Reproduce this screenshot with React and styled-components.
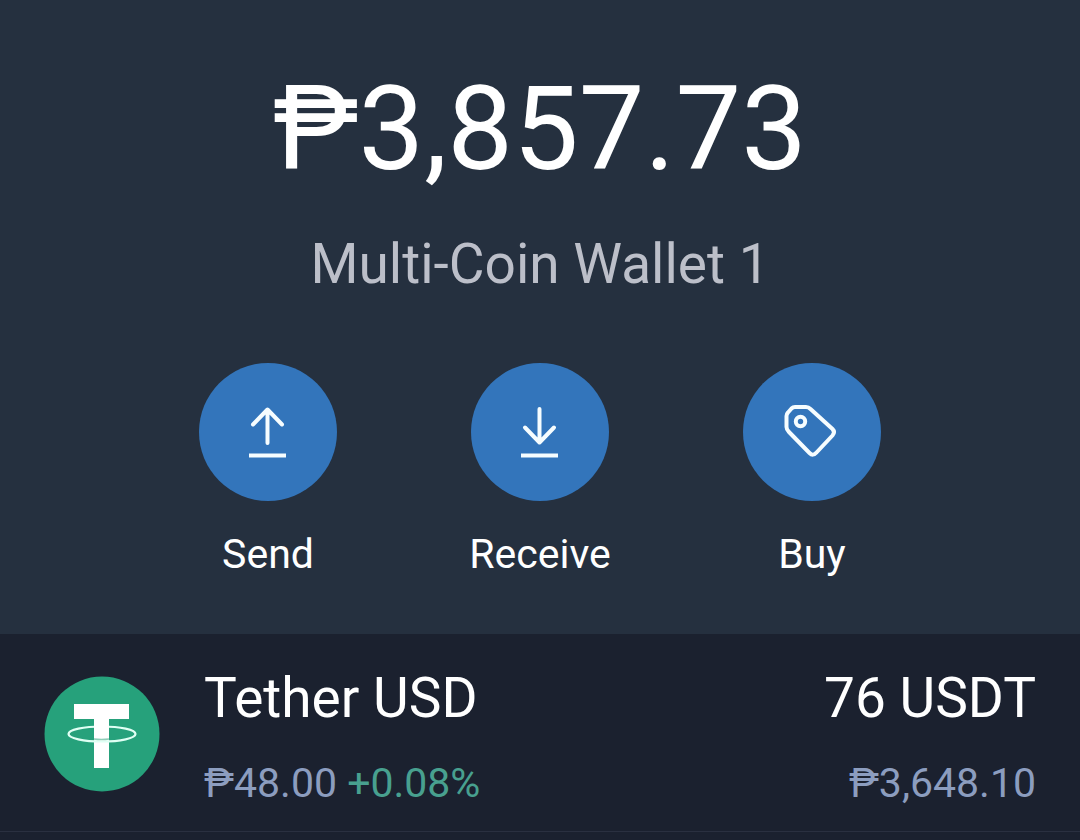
import React from "react";
import styled, { createGlobalStyle } from "styled-components";

const GlobalStyle = createGlobalStyle`
  *, *::before, *::after { box-sizing: border-box; }
  body {
    margin: 0;
    min-height: 100vh;
    background: #1b212f;
    color: #fff;
    font-family: Roboto, "Noto Sans", sans-serif;
  }
`;

const Summary = styled.header`
  display: flex;
  flex-direction: column;
  align-items: center;
  padding: 61px 24px 56px;
  background: #25303f;
`;

const Balance = styled.h1`
  margin: 0;
  font-size: 117px;
  line-height: 136px;
  font-weight: 400;
`;

const WalletName = styled.p`
  margin: 35px 0 0;
  font-size: 55px;
  line-height: 64px;
  color: #bcbfc9;
`;

const Actions = styled.nav`
  display: flex;
  justify-content: center;
  gap: 128px;
  margin-top: 67px;
`;

const ActionButton = styled.button`
  display: flex;
  flex-direction: column;
  align-items: center;
  gap: 29px;
  width: 144px;
  padding: 0;
  border: 0;
  background: none;
  color: #fff;
  font: inherit;
  font-size: 41px;
  line-height: 48px;
  cursor: pointer;
`;

const ActionDisc = styled.span`
  display: grid;
  place-items: center;
  width: 138px;
  height: 138px;
  border-radius: 50%;
  background: #3375bb;
`;

const ActionIcon = styled.svg`
  width: 60px;
  height: 60px;
  fill: none;
  stroke: #f6fdff;
  stroke-width: 4;
  stroke-linecap: round;
  stroke-linejoin: round;
`;

const AssetList = styled.ul`
  margin: 0;
  padding: 0;
  list-style: none;
`;

const AssetRow = styled.li`
  display: flex;
  align-items: center;
  gap: 44px;
  padding: 26px 44px 24px;
  border-bottom: 1px solid #2a3040;
`;

const AssetLogo = styled.svg`
  flex: none;
  width: 116px;
  height: 116px;
`;

const AssetColumn = styled.div`
  display: flex;
  flex-direction: column;
  gap: 23px;
  flex: ${(p) => (p.$end ? "none" : "1")};
  text-align: ${(p) => (p.$end ? "right" : "left")};
`;

const AssetTitle = styled.span`
  font-size: 55px;
  line-height: 76px;
`;

const AssetDetail = styled.span`
  font-size: 41px;
  line-height: 48px;
  color: #8c9dbf;
`;

const Change = styled.span`
  color: #48a08f;
`;

const SendIcon = () => (
  <ActionIcon viewBox="0 0 60 60" aria-hidden="true">
    <path d="M29.500 41V8M15 22.500L29.500 7.500L44 22.500" />
    <path d="M11 53.500H48" strokeLinecap="butt" />
  </ActionIcon>
);

const ReceiveIcon = () => (
  <ActionIcon viewBox="0 0 60 60" aria-hidden="true">
    <path d="M29.500 7V40M15 25.500L29.500 40.500L44 25.500" />
    <path d="M11 53.500H48" strokeLinecap="butt" />
  </ActionIcon>
);

const TagIcon = () => (
  <ActionIcon viewBox="0 0 60 60" aria-hidden="true">
    <path d="M13 5H24Q26.500 5 28.500 7L50.500 27Q53.500 30 50.500 33.500L34.500 50.500Q31 54.500 27.500 51L7 30Q4.500 27.500 4.500 25V14Q4.500 12 6 10.500L9.500 6.500Q11 5 13 5Z" />
    <circle cx="18.500" cy="19.500" r="4.700" />
  </ActionIcon>
);

const TetherLogo = () => (
  <AssetLogo viewBox="0 0 116 116" role="img" aria-label="Tether">
    <circle cx="58" cy="58" r="57.500" fill="#26a17b" />
    <path d="M30 28H85V43H65V92H50V43H30Z" fill="#fff" />
    <ellipse cx="58" cy="58" rx="33.500" ry="7.500" fill="none" stroke="#e0fff4" strokeWidth="2.200" />
    <path d="M50 49H65V62Q57.500 63 50 62Z" fill="#fff" />
    <path d="M50 63Q57.500 64 65 63" fill="none" stroke="#8fcdb8" strokeWidth="1.500" />
  </AssetLogo>
);

const actions = [
  { label: "Send", Icon: SendIcon },
  { label: "Receive", Icon: ReceiveIcon },
  { label: "Buy", Icon: TagIcon },
];

export default function App() {
  return (
    <main>
      <GlobalStyle />
      <Summary>
        <Balance>₱3,857.73</Balance>
        <WalletName>Multi-Coin Wallet 1</WalletName>
        <Actions aria-label="Wallet actions">
          {actions.map(({ label, Icon }) => (
            <ActionButton key={label} type="button">
              <ActionDisc>
                <Icon />
              </ActionDisc>
              {label}
            </ActionButton>
          ))}
        </Actions>
      </Summary>
      <AssetList>
        <AssetRow>
          <TetherLogo />
          <AssetColumn>
            <AssetTitle>Tether USD</AssetTitle>
            <AssetDetail>
              ₱48.00 <Change>+0.08%</Change>
            </AssetDetail>
          </AssetColumn>
          <AssetColumn $end>
            <AssetTitle>76 USDT</AssetTitle>
            <AssetDetail>₱3,648.10</AssetDetail>
          </AssetColumn>
        </AssetRow>
      </AssetList>
    </main>
  );
}
